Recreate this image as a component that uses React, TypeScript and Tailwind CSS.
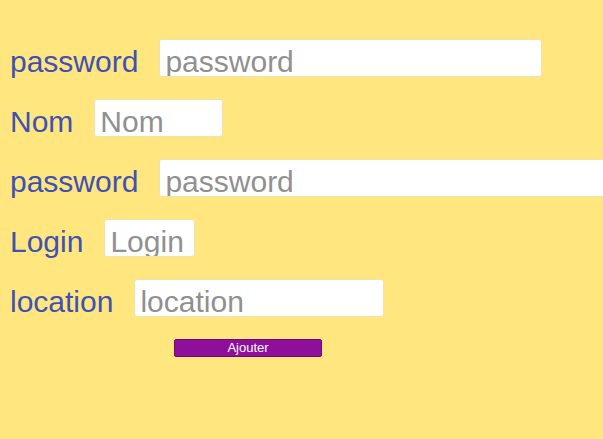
import React from "react";

const rows = [
  { label: "password", width: "w-[383px]" },
  { label: "Nom", width: "w-[129px]" },
  { label: "password", width: "w-[460px]" },
  { label: "Login", width: "w-[91px]" },
  { label: "location", width: "w-[250px]" },
];

export default function App() {
  return (
    <div
      className="min-h-[439px] w-full overflow-hidden bg-[#ffe67e] pt-[39px]"
      style={{ fontFamily: '"Liberation Sans", Arial, sans-serif' }}
    >
      <div className="flex flex-col gap-[22px]">
        {rows.map((r, i) => (
          <div key={i} className="flex h-[38px] items-start gap-[21px] pl-[10px] whitespace-nowrap">
            <label className="pt-[4px] text-[30px] leading-[38px] text-[#3f51b5]">{r.label}</label>
            <input
              type="text"
              placeholder={r.label}
              className={`${r.width} h-[38px] shrink-0 rounded-[3px] border border-[#efe2b0] bg-white pl-[5px] pr-[5px] pt-[6px] pb-0 text-[30px] text-[#333] outline-none placeholder:text-[#909090]`}
            />
          </div>
        ))}
        <div className="flex pl-[174px]">
          <button className="block h-[18px] w-[148px] rounded-[2px] border border-[#6e0a7a] bg-[#8e0f9a] text-[13px] leading-[14px] text-white">
            Ajouter
          </button>
        </div>
      </div>
    </div>
  );
}
